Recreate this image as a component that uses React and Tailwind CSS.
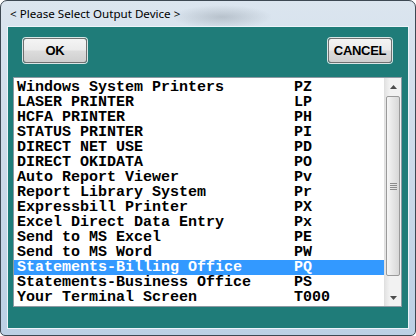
import React from "react";

const rows = [
  ["Windows System Printers", "PZ"],
  ["LASER PRINTER", "LP"],
  ["HCFA PRINTER", "PH"],
  ["STATUS PRINTER", "PI"],
  ["DIRECT NET USE", "PD"],
  ["DIRECT OKIDATA", "PO"],
  ["Auto Report Viewer", "Pv"],
  ["Report Library System", "Pr"],
  ["Expressbill Printer", "PX"],
  ["Excel Direct Data Entry", "Px"],
  ["Send to MS Excel", "PE"],
  ["Send to MS Word", "PW"],
  ["Statements-Billing Office", "PQ"],
  ["Statements-Business Office", "PS"],
  ["Your Terminal Screen", "T000"],
];

function Btn({ children }) {
  return (
    <div className="w-[64px] h-[25px] rounded-[3px] border border-[#707070] shadow-[0_0_0_1px_#d9e6e6] bg-[linear-gradient(to_bottom,#f4f4f4_0%,#ebebeb_48%,#dcdcdc_52%,#cfcfcf_100%)] flex items-center justify-center">
      <span className="font-['Liberation_Sans',sans-serif] font-bold text-[13px] tracking-[-0.3px] text-black leading-none">
        {children}
      </span>
    </div>
  );
}

export default function App() {
  return (
    <div className="w-[416px] h-[336px] rounded-t-[7px] rounded-b-[5px] border border-[#3d4853] bg-[linear-gradient(to_bottom,#dbe5ef_0%,#cfdcea_40%,#bcd0e5_100%)] px-[6px] pb-[6px] flex flex-col">
      <div className="h-[25px] flex items-center pl-[3px] bg-[radial-gradient(ellipse_50px_12px_at_215px_16px,rgba(120,130,140,0.35),transparent)]">
        <span className="font-['Noto_Sans',sans-serif] text-[11.6px] text-black leading-none">
          &lt; Please Select Output Device &gt;
        </span>
      </div>
      <div className="border border-[#edf3f9] bg-[#1f7c79] h-[303px] flex flex-col">
        <div className="flex justify-between pl-[15px] pr-[16px] pt-[11px]">
          <Btn>OK</Btn>
          <Btn>CANCEL</Btn>
        </div>
        <div className="mt-[14px] ml-[5px] w-[389px] h-[230px] border border-[#8d9aa3] bg-white flex">
          <div className="w-[370px] pt-[2px] font-['Liberation_Mono',monospace] font-bold text-[15px] leading-[15px]">
            {rows.map(([name, code], i) => {
              const sel = i === 12;
              return (
                <div
                  key={i}
                  className={
                    "h-[15px] flex pl-[3px] whitespace-pre " +
                    (sel ? "bg-[#3399ff] text-white" : "text-black")
                  }
                >
                  <span className="w-[277px]">{name}</span>
                  <span>{code}</span>
                </div>
              );
            })}
          </div>
          <div className="w-[17px] h-full bg-[linear-gradient(to_right,#e3e3e3,#f2f2f2_30%,#f2f2f2)] border-l border-[#e0e0e0] flex flex-col">
            <div className="h-[17px] flex items-center justify-center">
              <svg width="7" height="4" viewBox="0 0 7 4">
                <path d="M0 4 L3.5 0 L7 4 Z" fill="#4d4d4d" />
              </svg>
            </div>
            <div className="mx-[1px] mt-[1px] h-[180px] rounded-[2px] border border-[#9a9a9a] bg-[linear-gradient(to_right,#f6f6f6,#e6e6e6_50%,#d8d8d8)] flex items-center justify-center">
              <div className="flex flex-col gap-[1px]">
                <div className="w-[7px] h-[1px] bg-[#8c8c8c]" />
                <div className="w-[7px] h-[1px] bg-[#8c8c8c]" />
                <div className="w-[7px] h-[1px] bg-[#8c8c8c]" />
                <div className="w-[7px] h-[1px] bg-[#8c8c8c]" />
              </div>
            </div>
            <div className="flex-1" />
            <div className="h-[17px] flex items-center justify-center">
              <svg width="7" height="4" viewBox="0 0 7 4">
                <path d="M0 0 L7 0 L3.5 4 Z" fill="#4d4d4d" />
              </svg>
            </div>
          </div>
        </div>
      </div>
    </div>
  );
}
